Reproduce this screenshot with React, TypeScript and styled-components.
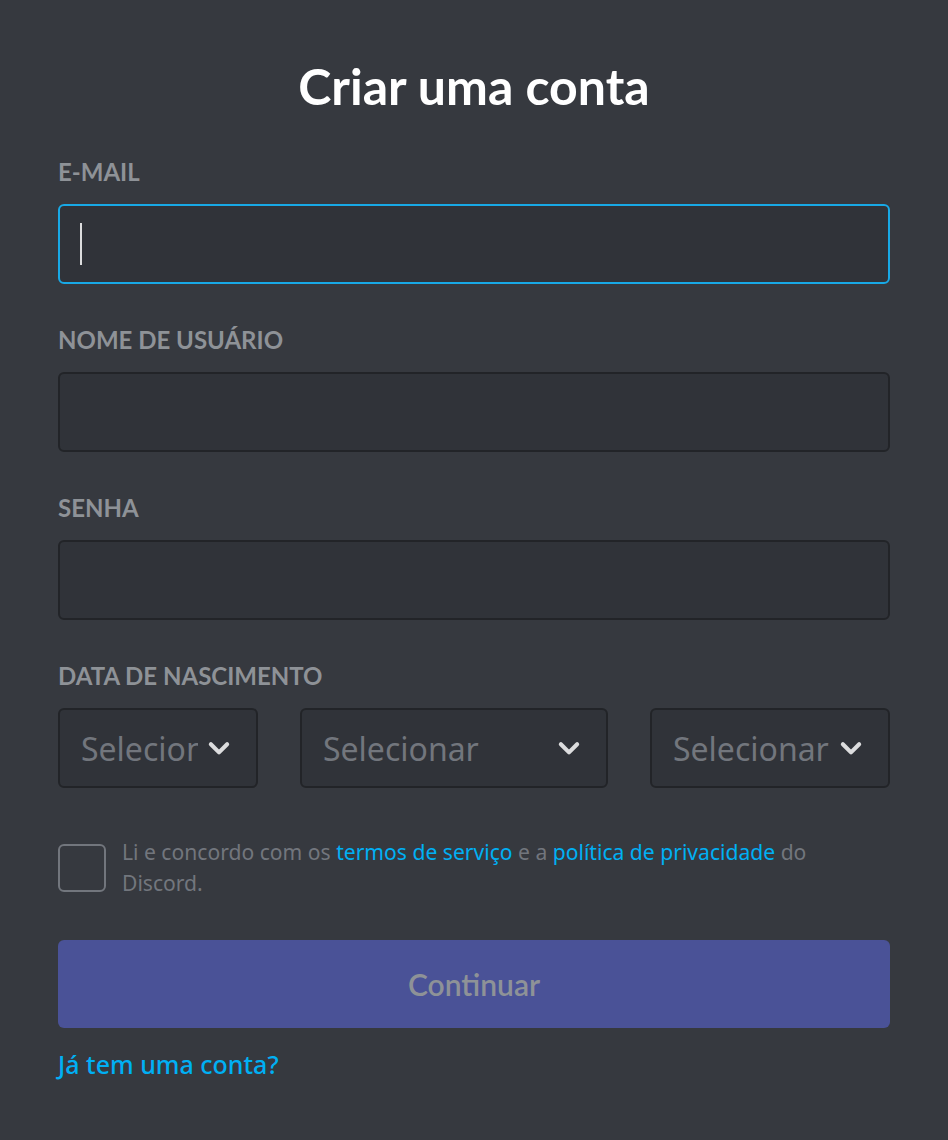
import styled, { createGlobalStyle } from "styled-components";

const GlobalStyles = createGlobalStyle`
  html, body {
    margin: 0;
    padding: 0;
    background: #36393f;
  }

  body {
    font-family: "Noto Sans", "Open Sans", sans-serif;
    -webkit-font-smoothing: antialiased;
  }
`;

const Page = styled.div`
  width: 948px;
  height: 1140px;
  box-sizing: border-box;
  background: #36393f;
  padding: 56px 58px 0;
  display: flex;
  flex-direction: column;
`;

const Title = styled.h1`
  margin: 0;
  font-family: Lato, "Noto Sans", sans-serif;
  font-weight: 700;
  font-size: 50px;
  line-height: 60px;
  color: #ffffff;
  text-align: center;
`;

const Form = styled.form`
  display: flex;
  flex-direction: column;
  margin-top: 40px;
`;

const Field = styled.div<{ $last?: boolean }>`
  display: flex;
  flex-direction: column;
  margin-bottom: ${(p) => (p.$last ? 0 : 40)}px;
`;

const Label = styled.label`
  font-family: Lato, "Noto Sans", sans-serif;
  font-weight: 700;
  font-size: 24px;
  line-height: 32px;
  color: #8e9297;
  text-transform: uppercase;
  margin-bottom: 16px;
`;

const Input = styled.div<{ $focused?: boolean }>`
  height: 80px;
  box-sizing: border-box;
  border-radius: 6px;
  background: #303339;
  border: 2px solid ${(p) => (p.$focused ? "#18a9e6" : "#222428")};
  display: flex;
  align-items: center;
  padding: 0 20px;
`;

const Caret = styled.span`
  width: 2px;
  height: 42px;
  background: #dcddde;
`;

const SelectRow = styled.div`
  display: flex;
  gap: 42px;
`;

const Select = styled.div<{ $width: number }>`
  width: ${(p) => p.$width}px;
  height: 80px;
  box-sizing: border-box;
  border-radius: 6px;
  background: #303339;
  border: 2px solid #222428;
  display: flex;
  align-items: center;
  padding: 0 24px 0 21px;
  gap: 8px;
`;

const Placeholder = styled.span`
  flex: 1;
  min-width: 0;
  overflow: hidden;
  white-space: nowrap;
  font-size: 32px;
  color: #72767d;
`;

const Agree = styled.div`
  display: flex;
  gap: 16px;
  margin-top: 48px;
  margin-bottom: 42px;
`;

const Checkbox = styled.div`
  flex: none;
  width: 48px;
  height: 48px;
  box-sizing: border-box;
  border: 2px solid #72767d;
  border-radius: 6px;
  margin-top: 8px;
`;

const AgreeText = styled.p`
  margin: 0;
  max-width: 730px;
  font-size: 21.1px;
  line-height: 31px;
  color: #72767d;
`;

const Link = styled.a`
  color: #00b0f4;
  text-decoration: none;
`;

const SubmitButton = styled.button`
  height: 88px;
  border: none;
  border-radius: 6px;
  background: #4a5297;
  color: #8e9297;
  font-family: Lato, "Noto Sans", sans-serif;
  font-weight: 600;
  font-size: 30px;
`;

const LoginLink = styled.a`
  margin-top: 16px;
  font-size: 25px;
  font-weight: 500;
  line-height: 40px;
  color: #00b0f4;
  align-self: flex-start;
`;

const Chevron = () => (
  <svg width="26" height="26" viewBox="0 0 24 24" style={{ flex: "none" }}>
    <path
      d="M4.5 8.5 L12 16 L19.5 8.5"
      fill="none"
      stroke="#dcddde"
      strokeWidth="3.8"
      strokeLinecap="round"
      strokeLinejoin="round"
    />
  </svg>
);

const App = () => {
  return (
    <>
      <GlobalStyles />
      <Page>
        <Title>Criar uma conta</Title>
        <Form onSubmit={(e) => e.preventDefault()}>
          <Field>
            <Label>E-mail</Label>
            <Input $focused>
              <Caret />
            </Input>
          </Field>
          <Field>
            <Label>Nome de usuário</Label>
            <Input />
          </Field>
          <Field>
            <Label>Senha</Label>
            <Input />
          </Field>
          <Field $last>
            <Label>Data de nascimento</Label>
            <SelectRow>
              <Select $width={200}>
                <Placeholder>Selecionar</Placeholder>
                <Chevron />
              </Select>
              <Select $width={308}>
                <Placeholder>Selecionar</Placeholder>
                <Chevron />
              </Select>
              <Select $width={240}>
                <Placeholder>Selecionar</Placeholder>
                <Chevron />
              </Select>
            </SelectRow>
          </Field>
          <Agree>
            <Checkbox />
            <AgreeText>
              Li e concordo com os <Link>termos de serviço</Link> e a{" "}
              <Link>política de privacidade</Link> do Discord.
            </AgreeText>
          </Agree>
          <SubmitButton type="submit">Continuar</SubmitButton>
          <LoginLink>Já tem uma conta?</LoginLink>
        </Form>
      </Page>
    </>
  );
};

export default App;
